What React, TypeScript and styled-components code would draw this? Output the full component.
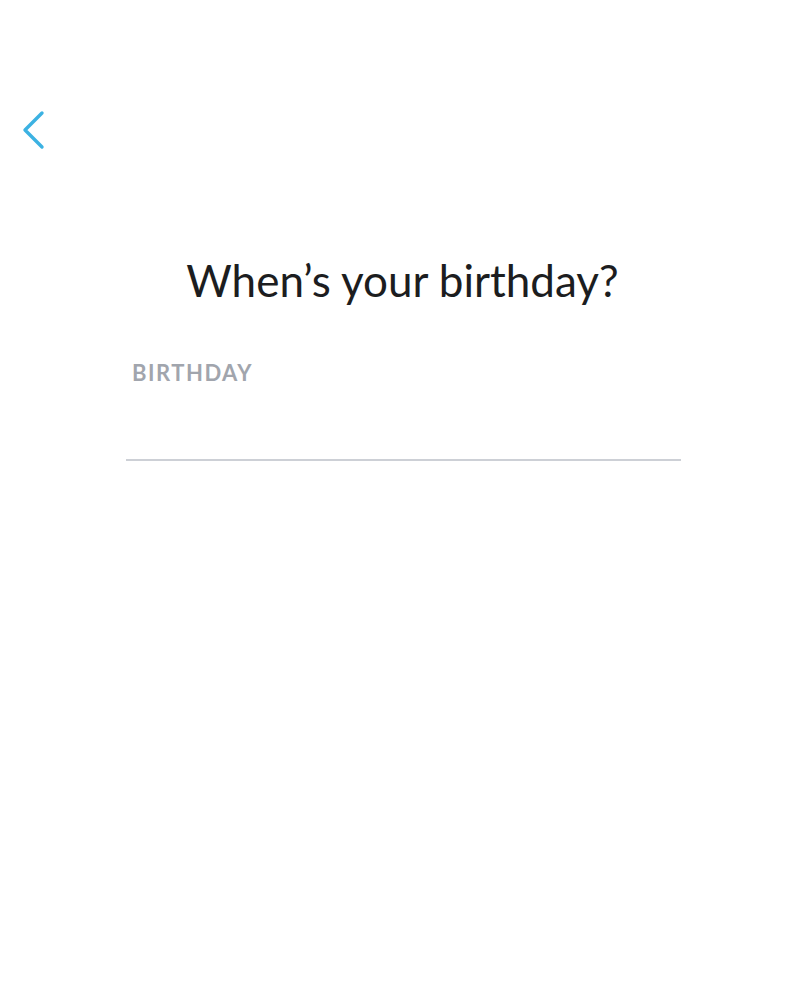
import React from "react";
import styled, { createGlobalStyle } from "styled-components";

const Global = createGlobalStyle`
  html, body { margin: 0; padding: 0; background: #fff; }
  body { font-family: Lato, "Noto Sans", sans-serif; }
`;

const Page = styled.div`
  width: 805px;
  height: 1000px;
  background: #fff;
  display: flex;
  flex-direction: column;
`;

const TopBar = styled.div`
  height: 160px;
  display: flex;
  align-items: flex-start;
  padding: 110px 0 0 20px;
  box-sizing: border-box;
`;

const BackButton = styled.button`
  background: none;
  border: 0;
  padding: 0;
  width: 30px;
  height: 40px;
  cursor: pointer;
  display: flex;
`;

const Title = styled.h1`
  margin: 92px 0 0;
  text-align: center;
  font-weight: 400;
  font-size: 44px;
  line-height: 56px;
  color: #1c1d20;
`;

const Field = styled.div`
  margin: 53px 124px 0 126px;
  display: flex;
  flex-direction: column;
`;

const Label = styled.label`
  padding-left: 6px;
  font-size: 22px;
  font-weight: 700;
  letter-spacing: 1.5px;
  color: #a1a5ad;
  line-height: 24px;
`;

const Input = styled.div`
  height: 74px;
  border-bottom: 2px solid #cdd0d6;
`;

export default function App() {
  return (
    <Page>
      <Global />
      <TopBar>
        <BackButton aria-label="Back">
          <svg width="30" height="40" viewBox="0 0 30 40">
            <path d="M22 3 L5 20 L22 37" fill="none" stroke="#3cb2e2" strokeWidth="3.4" strokeLinecap="round" strokeLinejoin="round" />
          </svg>
        </BackButton>
      </TopBar>
      <Title>When’s your birthday?</Title>
      <Field>
        <Label>BIRTHDAY</Label>
        <Input />
      </Field>
    </Page>
  );
}
